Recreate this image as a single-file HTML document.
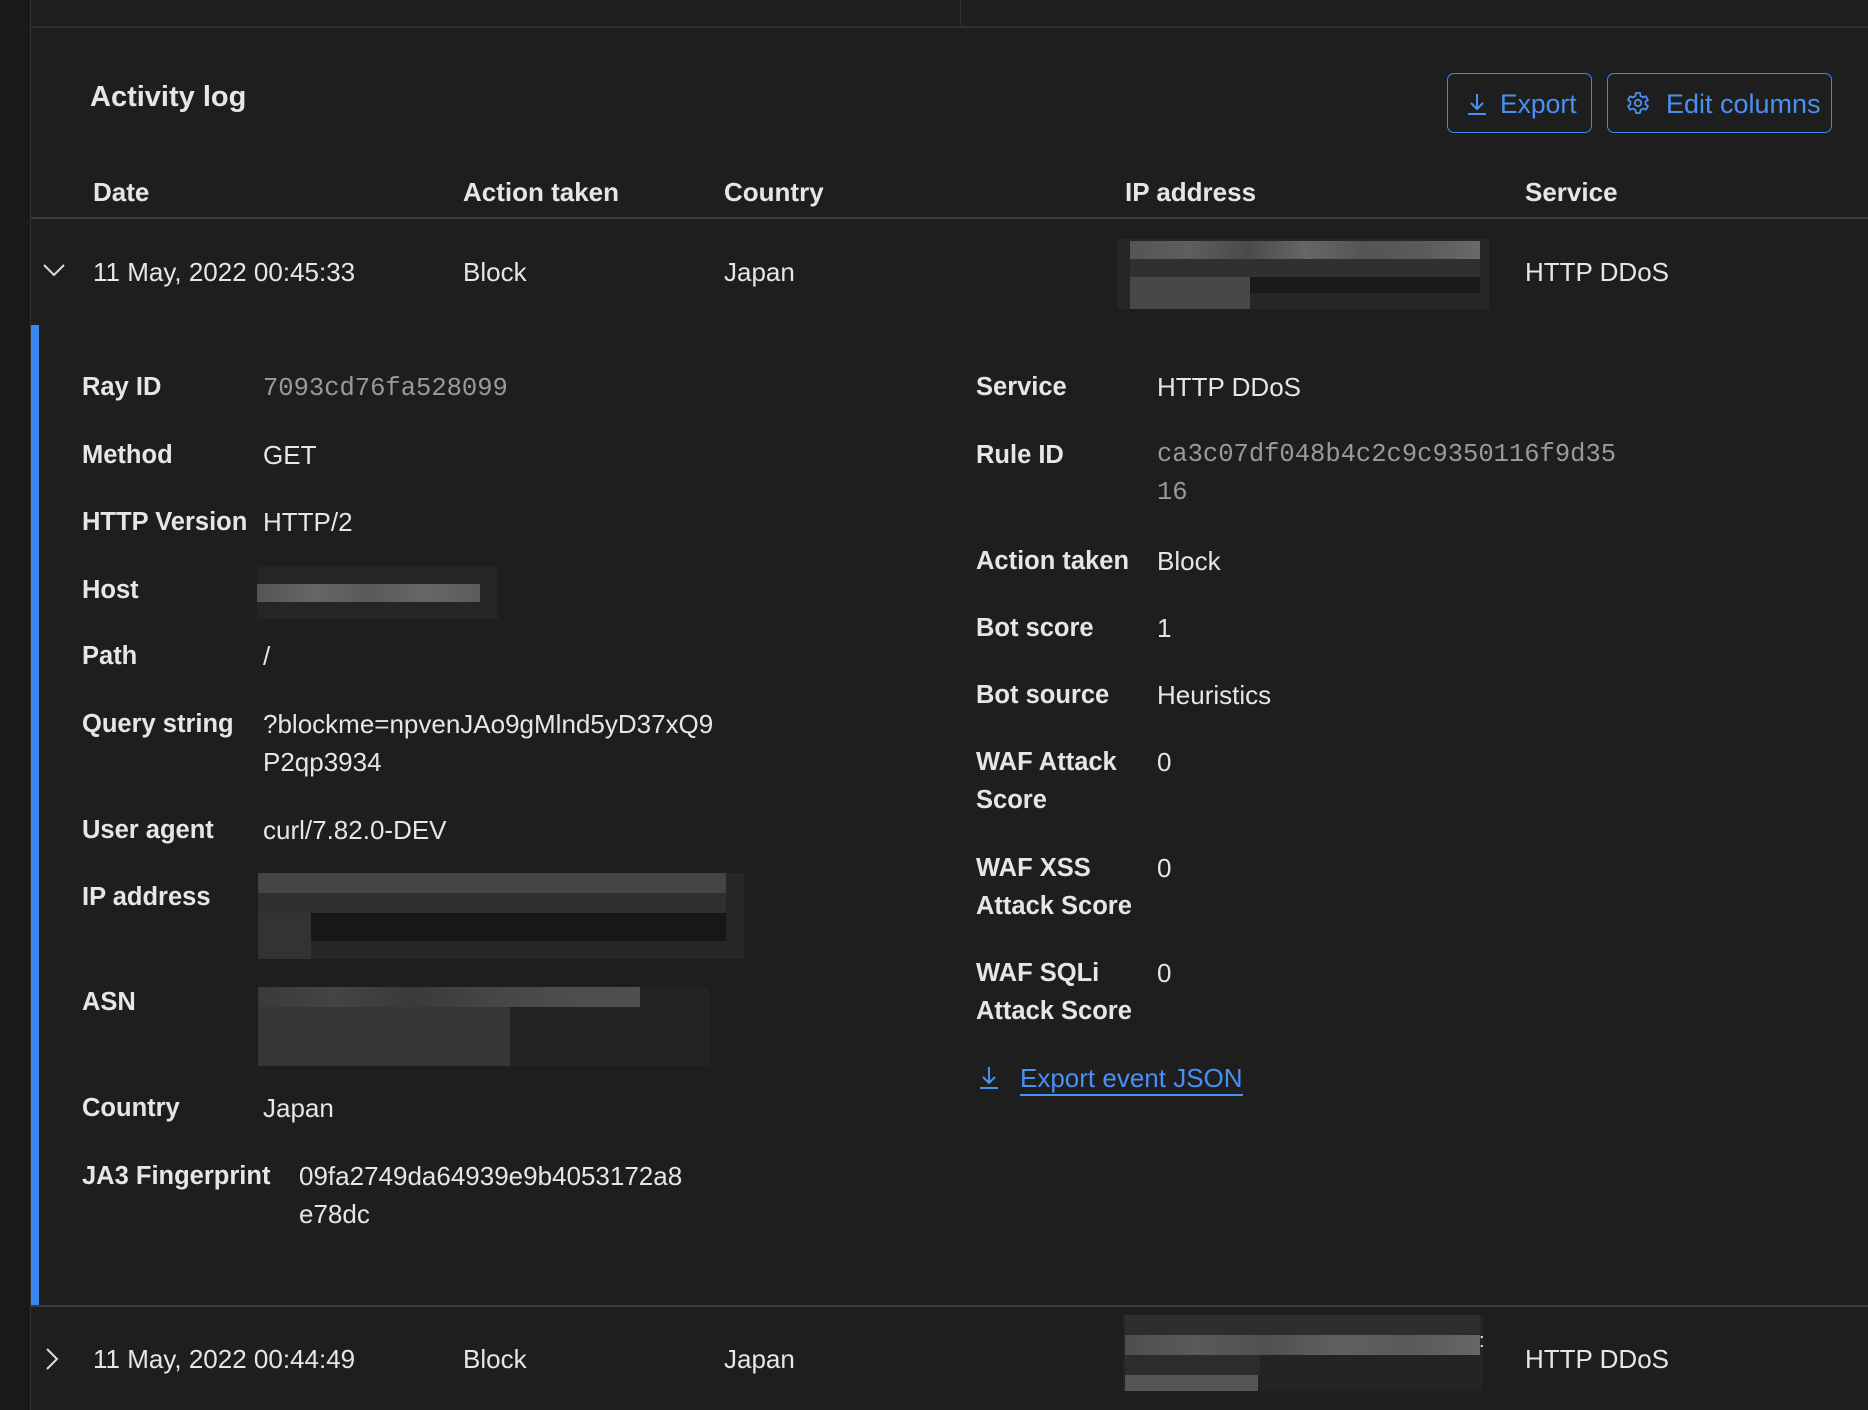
<!DOCTYPE html>
<html><head><meta charset="utf-8"><style>
*{margin:0;padding:0;box-sizing:border-box}
body{width:1868px;height:1410px;background:#1e1e1e;font-family:"Liberation Sans",Arial,sans-serif;color:#e6e6e6;position:relative;overflow:hidden;font-size:26px}
.a{position:absolute;white-space:nowrap;line-height:38px}
.b{font-weight:bold;font-size:25.5px}
.m{font-family:"Liberation Mono",monospace;color:#9a9a9a;font-size:25.5px}
.r{position:absolute}
.blue{color:#4a90f2}
</style></head><body>
<div class="r" style="left:0;top:0;width:30px;height:1410px;background:#1a1a1a"></div>
<div class="r" style="left:30px;top:0;width:1px;height:1410px;background:#333"></div>
<div class="r" style="left:31px;top:26px;width:1837px;height:2px;background:#2f2f2f"></div>
<div class="r" style="left:960px;top:0;width:1px;height:26px;background:#2f2f2f"></div>

<div class="a b" style="left:90px;top:78px;font-size:29px">Activity log</div>

<div class="r" style="left:1447px;top:73px;width:145px;height:60px;border:1.5px solid #3f86ee;border-radius:7px"></div>
<svg class="r" style="left:1466px;top:92px" width="22" height="24" viewBox="0 0 22 24" fill="none" stroke="#4a90f2" stroke-width="2"><path d="M11 2v15M5 11l6 6 6-6M2 22h18"/></svg>
<div class="a blue" style="left:1500px;top:85px;font-size:26.5px">Export</div>
<div class="r" style="left:1607px;top:73px;width:225px;height:60px;border:1.5px solid #3f86ee;border-radius:7px"></div>
<svg class="r" style="left:1626px;top:91px" width="24" height="24" viewBox="0 0 24 24" fill="none" stroke="#4a90f2" stroke-width="1.8"><circle cx="12" cy="12" r="3.2"/><path d="M10 2h4l.6 3 2.4 1.4 2.9-1 2 3.4-2.3 2v2.4l2.3 2-2 3.4-2.9-1L14.6 19 14 22h-4l-.6-3L7 17.6l-2.9 1-2-3.4 2.3-2v-2.4l-2.3-2 2-3.4 2.9 1L9.4 5z"/></svg>
<div class="a blue" style="left:1666px;top:85px;font-size:27px">Edit columns</div>

<div class="a b" style="left:93px;top:173px;font-size:26px">Date</div>
<div class="a b" style="left:463px;top:173px;font-size:26px">Action taken</div>
<div class="a b" style="left:724px;top:173px;font-size:26px">Country</div>
<div class="a b" style="left:1125px;top:173px;font-size:26px">IP address</div>
<div class="a b" style="left:1525px;top:173px;font-size:26px">Service</div>
<div class="r" style="left:31px;top:217px;width:1837px;height:2px;background:#3a3a3a"></div>

<svg class="r" style="left:42px;top:262px" width="24" height="16" viewBox="0 0 24 16" fill="none" stroke="#ddd" stroke-width="2"><path d="M2 3l10 10 10-10"/></svg>
<div class="a" style="left:93px;top:253px">11 May, 2022 00:45:33</div>
<div class="a" style="left:463px;top:253px">Block</div>
<div class="a" style="left:724px;top:253px">Japan</div>
<div class="r" style="left:1117px;top:239px;width:372px;height:70px;background:#262626"></div>
<div class="r" style="left:1130px;top:241px;width:350px;height:18px;background:linear-gradient(90deg,#555,#5e5e5e,#4a4a4a,#666,#555,#5a5a5a,#6a6a6a)"></div>
<div class="r" style="left:1130px;top:259px;width:350px;height:18px;background:#303030"></div>
<div class="r" style="left:1130px;top:277px;width:120px;height:32px;background:#484848"></div>
<div class="r" style="left:1250px;top:277px;width:230px;height:16px;background:#1a1a1a"></div>
<div class="a" style="left:1525px;top:253px">HTTP DDoS</div>

<div class="r" style="left:31px;top:325px;width:8px;height:980px;background:#3b86f2"></div>

<div class="a b" style="left:82px;top:368px">Ray ID</div><div class="a m" style="left:263px;top:370px">7093cd76fa528099</div>
<div class="a b" style="left:82px;top:436px">Method</div><div class="a" style="left:263px;top:436px">GET</div>
<div class="a b" style="left:82px;top:503px">HTTP Version</div><div class="a" style="left:263px;top:503px">HTTP/2</div>
<div class="a b" style="left:82px;top:571px">Host</div>
<div class="r" style="left:257px;top:567px;width:241px;height:52px;background:#252525"></div>
<div class="r" style="left:257px;top:584px;width:223px;height:18px;background:linear-gradient(90deg,#555,#666,#5a5a5a,#666,#5c5c5c)"></div>
<div class="a b" style="left:82px;top:637px">Path</div><div class="a" style="left:263px;top:637px">/</div>
<div class="a b" style="left:82px;top:705px">Query string</div><div class="a" style="left:263px;top:705px">?blockme=npvenJAo9gMlnd5yD37xQ9<br>P2qp3934</div>
<div class="a b" style="left:82px;top:811px">User agent</div><div class="a" style="left:263px;top:811px">curl/7.82.0-DEV</div>
<div class="a b" style="left:82px;top:878px">IP address</div>
<div class="r" style="left:258px;top:873px;width:486px;height:86px;background:#262626"></div>
<div class="r" style="left:258px;top:873px;width:468px;height:20px;background:#444"></div>
<div class="r" style="left:258px;top:893px;width:468px;height:20px;background:#303030"></div>
<div class="r" style="left:258px;top:913px;width:53px;height:46px;background:#333"></div>
<div class="r" style="left:311px;top:913px;width:415px;height:28px;background:#171717"></div>
<div class="a b" style="left:82px;top:983px">ASN</div>
<div class="r" style="left:258px;top:987px;width:451px;height:79px;background:#232323"></div>
<div class="r" style="left:258px;top:987px;width:382px;height:20px;background:linear-gradient(90deg,#3a3a3a,#444,#3a3a3a,#454545,#4d4d4d,#4f4f4f)"></div>
<div class="r" style="left:258px;top:1007px;width:252px;height:59px;background:#363636"></div>
<div class="a b" style="left:82px;top:1089px">Country</div><div class="a" style="left:263px;top:1089px">Japan</div>
<div class="a b" style="left:82px;top:1157px">JA3 Fingerprint</div><div class="a" style="left:299px;top:1157px">09fa2749da64939e9b4053172a8<br>e78dc</div>

<div class="a b" style="left:976px;top:368px">Service</div><div class="a" style="left:1157px;top:368px">HTTP DDoS</div>
<div class="a b" style="left:976px;top:436px">Rule ID</div><div class="a m" style="left:1157px;top:436px">ca3c07df048b4c2c9c9350116f9d35<br>16</div>
<div class="a b" style="left:976px;top:542px">Action taken</div><div class="a" style="left:1157px;top:542px">Block</div>
<div class="a b" style="left:976px;top:609px">Bot score</div><div class="a" style="left:1157px;top:609px">1</div>
<div class="a b" style="left:976px;top:676px">Bot source</div><div class="a" style="left:1157px;top:676px">Heuristics</div>
<div class="a b" style="left:976px;top:743px">WAF Attack<br>Score</div><div class="a" style="left:1157px;top:743px">0</div>
<div class="a b" style="left:976px;top:849px">WAF XSS<br>Attack Score</div><div class="a" style="left:1157px;top:849px">0</div>
<div class="a b" style="left:976px;top:954px">WAF SQLi<br>Attack Score</div><div class="a" style="left:1157px;top:954px">0</div>
<svg class="r" style="left:978px;top:1066px" width="22" height="24" viewBox="0 0 22 24" fill="none" stroke="#4a90f2" stroke-width="2"><path d="M11 1v16M5 11l6 6 6-6M2 22h18"/></svg>
<div class="a blue" style="left:1020px;top:1062px;font-size:26px;border-bottom:2px solid #4a90f2;line-height:32px">Export event JSON</div>

<div class="r" style="left:31px;top:1305px;width:1837px;height:2px;background:#3a3a3a"></div>
<svg class="r" style="left:44px;top:1347px" width="16" height="24" viewBox="0 0 16 24" fill="none" stroke="#ddd" stroke-width="2"><path d="M3 2l10 10-10 10"/></svg>
<div class="a" style="left:93px;top:1340px">11 May, 2022 00:44:49</div>
<div class="a" style="left:463px;top:1340px">Block</div>
<div class="a" style="left:724px;top:1340px">Japan</div>
<div class="r" style="left:1123px;top:1315px;width:360px;height:76px;background:#242424"></div>
<div class="r" style="left:1125px;top:1315px;width:355px;height:20px;background:#2e2e2e"></div>
<div class="r" style="left:1125px;top:1335px;width:355px;height:20px;background:linear-gradient(90deg,#4e4e4e,#5a5a5a,#505050,#606060,#5a5a5a,#666)"></div>
<div class="r" style="left:1125px;top:1355px;width:135px;height:20px;background:#2c2c2c"></div>
<div class="r" style="left:1125px;top:1375px;width:133px;height:16px;background:#555"></div>
<div class="a" style="left:1479px;top:1322px;font-size:20px">:</div>
<div class="a" style="left:1525px;top:1340px">HTTP DDoS</div>
</body></html>
